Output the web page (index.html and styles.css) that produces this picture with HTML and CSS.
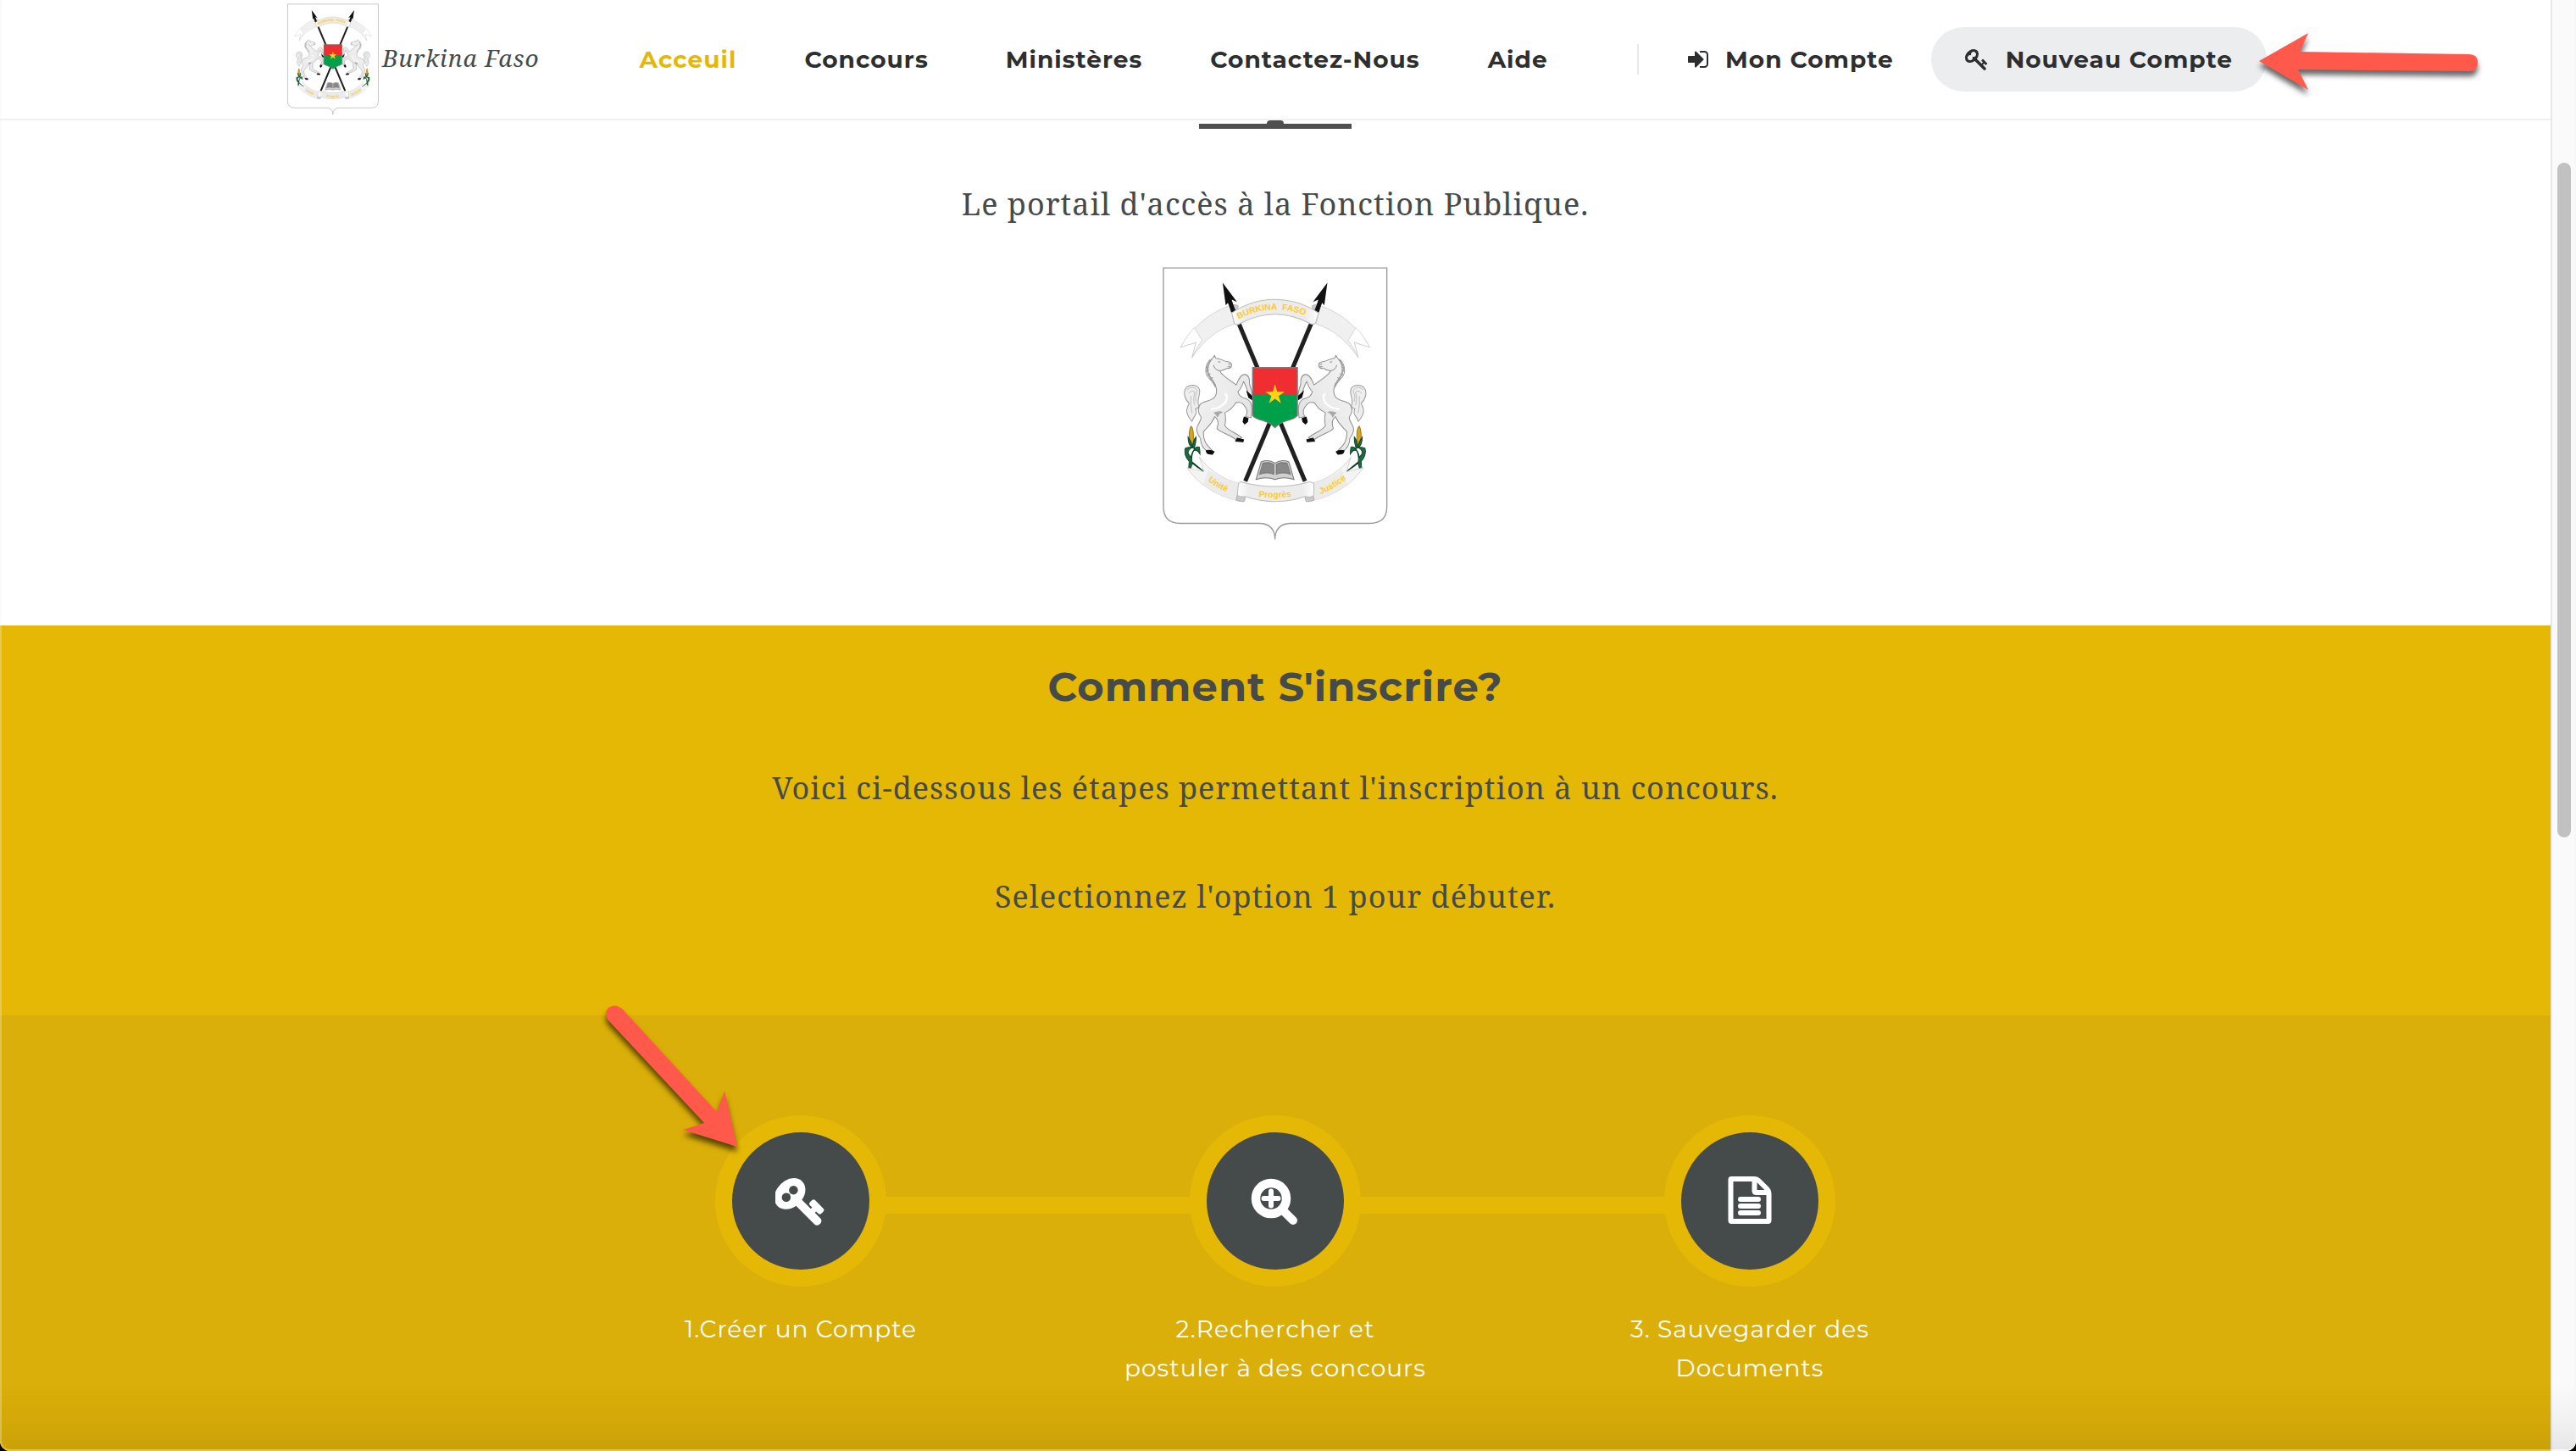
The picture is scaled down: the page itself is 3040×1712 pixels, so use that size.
FILE: index.html
```html
<!DOCTYPE html>
<html lang="fr">
<head>
<meta charset="utf-8">
<meta name="viewport" content="width=device-width, initial-scale=1">
<title>Burkina Faso - Fonction Publique</title>
<link rel="stylesheet" href="styles.css">
</head>
<body>
<svg class="defs" aria-hidden="true">
  <defs>
    <symbol id="icon-key" viewBox="0 0 1792 1792"><path d="M832 512q0-80-56-136t-136-56-136 56-56 136q0 42 19 83-41-19-83-19-80 0-136 56t-56 136 56 136 136 56 136-56 56-136q0-42-19-83 41 19 83 19 80 0 136-56t56-136zm851 704q0 17-49 66t-66 49q-9 0-28.5-16t-36.5-33-38.5-40-24.5-26l-96 96 220 220q28 28 28 68 0 42-39 81t-81 39q-40 0-68-28l-671-671q-176 131-365 131-163 0-265.5-102.5t-102.5-265.5q0-160 95-313t248-248 313-95q163 0 265.5 102.5t102.5 265.5q0 189-131 365l355 355 96-96q-3-3-26-24.5t-40-38.5-33-36.5-16-28.5q0-17 49-66t66-49q13 0 23 10 6 6 46 44.5t82 79.5 86.5 86 73 78 28.5 41z"/></symbol>
    <symbol id="icon-sign-in" viewBox="128 128 1536 1536"><path d="M1312 896q0 26-19 45l-544 544q-19 19-45 19t-45-19-19-45v-288h-448q-26 0-45-19t-19-45v-384q0-26 19-45t45-19h448v-288q0-26 19-45t45-19 45 19l544 544q19 19 19 45zm352-352v704q0 119-84.500 203.500t-203.500 84.500h-320q-13 0-22.500-9.500t-9.500-22.500q0-4-1-20t-.5-26.500 3-23.500 10-19.500 20.500-6.500h320q66 0 113-47t47-113v-704q0-66-47-113t-113-47h-312l-11.500-1-11.500-3-8-5.500-7-9-2-13.500q0-4-1-20t-.5-26.500 3-23.500 10-19.500 20.500-6.500h320q119 0 203.500 84.500t84.500 203.500z"/></symbol>
    <symbol id="icon-search" viewBox="0 0 60 60">
      <circle cx="25" cy="27" r="18" fill="none" stroke="currentColor" stroke-width="10.500"/>
      <path d="M25 18.500v17M16.500 27h17" stroke="currentColor" stroke-width="6" stroke-linecap="round"/>
      <path d="M38 40l13 13" stroke="currentColor" stroke-width="10" stroke-linecap="round"/>
    </symbol>
    <symbol id="icon-file" viewBox="0 0 60 60">
      <path d="M8 4h27.500q3 0 5 2l10 10q2 2 2 5v32q0 1-1 1H8.500q-1 0-1-1V5q0-1 .5-1z" fill="none" stroke="currentColor" stroke-width="6" stroke-linejoin="round"/>
      <path d="M35.500 5v13q0 2 2 2H52" fill="none" stroke="currentColor" stroke-width="6"/>
      <path d="M19 28h21M19 36h21M19 44h21" stroke="currentColor" stroke-width="6" stroke-linecap="round"/>
    </symbol>

    <linearGradient id="ribbon" x1="0" y1="0" x2="1" y2="0">
      <stop offset="0" stop-color="#fff"/><stop offset=".15" stop-color="#ececec"/>
      <stop offset=".85" stop-color="#ececec"/><stop offset="1" stop-color="#fff"/>
    </linearGradient>
    <linearGradient id="coat" x1="0" y1="0" x2="1" y2="1">
      <stop offset="0" stop-color="#f4f4f4"/><stop offset=".5" stop-color="#ebebeb"/><stop offset="1" stop-color="#dcdcdc"/>
    </linearGradient>

    <g id="crest-side">
      <path d="M312 209C240 232 175 285 134 357l54-17-14 54C210 340 262 292 322 276z" fill="#f0f0f0" stroke="#c4c4c4" stroke-width="2"/>
      <path d="M188 340L134 357C150 328 165 305 182 288L210 333C196 350 184 372 174 394z" fill="#fff" stroke="#c4c4c4" stroke-width="2"/>
      <path d="M306 211q20-8 32 0l-6 20-18 6z" fill="#c9c9c9" stroke="#aaa" stroke-width="2"/>
      <path d="M200 568C188 550 200 535 201 515C202 492 175 484 155 498C140 515 148 540 164 556C152 575 150 592 174 619C178 600 196 596 186 574z" fill="#eee" stroke="#9a9a9a" stroke-width="3"/>
      <path d="M156 508q22-20 36 2-10 22-4 40M162 520q12-14 22-4-8 26 0 46M170 530q-2 30 4 60" fill="none" stroke="#aaa" stroke-width="2"/>
      <path d="M247 396L253 386L258 396C272 396 284 406 300 408Q316 410 313 424Q310 434 296 432C286 440 276 438 272 442C284 462 310 474 330 490C338 470 346 453 360 453C374 454 378 470 377 484C378 500 388 506 387 536L376 528C370 512 364 492 356 478C350 496 344 506 336 514C340 530 350 535 368 540C386 550 388 570 383 606L362 602C372 590 370 574 352 556C344 548 336 554 330 552C316 574 306 582 290 588C294 606 292 624 290 634C304 654 328 658 350 676L332 686C314 668 276 660 262 644C268 628 268 612 254 602C244 630 226 640 214 656C214 690 226 704 246 722L230 726C210 714 204 696 204 680C198 668 188 660 191 642C196 626 206 618 206 604C192 586 194 566 206 556C228 544 246 546 256 530C266 512 258 488 246 474C226 456 222 430 232 414Q238 402 247 396z" fill="url(#coat)" stroke="#8e8e8e" stroke-width="3" stroke-linejoin="round"/>
      <path d="M245 398C232 412 226 438 234 454C242 470 252 476 258 496M238 400C220 420 218 446 230 462C240 474 252 484 256 498M223 430l10-2M224 442l10-4M229 456l10-6M238 468l10-4" fill="none" stroke="#999" stroke-width="3"/>
      <path d="M250 420q4 18 22 20M302 416l8 2M300 426h10M266 408l8 2" fill="none" stroke="#555" stroke-width="2"/>
      <path d="M250 588q20-8 34-2-14 4-20 20-6-12-14-18z" fill="#a8a8a8"/>
      <path d="M290 520q14 10 0 34-20 20-50 22" fill="none" stroke="#fff" stroke-width="7"/>
      <path d="M368 514l18 16v12l-12-8zM358 604l14 4-2 12-10 8-6-8zM334 678l22 6-2 7-26-2zM224 722q14-4 28 4l-6 9q-16 0-20-6z" fill="#0c0c0c" stroke="#0c0c0c" stroke-width="3"/>
      <path d="M170 636q12 4 8 66l-8 2q-12-42 0-68z" fill="#d9a51c" stroke="#8f7d1d" stroke-width="3"/>
      <path d="M174 712q-14-10-14-38 10 14 16 34 2-22 12-34 0 26-8 42 12-10 20-6 2 14 2 24-10-18-22-12-10 20-6 40l42 34-24-16-18-14-4 18-8 2 2-26q-20-20-14-46 10-6 28-4-20 8-18 22l10 14q4-22 16-32z" fill="#1d6b3e" stroke="#10452a" stroke-width="3"/>
      <path d="M200 745C235 792 285 826 342 838L334 899C262 882 196 842 156 782L216 797z" fill="#f4f4f4" stroke="#c4c4c4" stroke-width="2"/>
      <path d="M232 790C262 814 300 830 340 838L334 899C290 888 248 868 214 842z" fill="#ebebeb"/>
      <path d="M334 878q24-2 28 12l-4 12q-22 0-28-6z" fill="#c9c9c9" stroke="#999" stroke-width="2"/>
    </g>

    <symbol id="crest" viewBox="70 74 796 966">
      <path d="M73 77H862V920Q862 979 802 979H520Q467 982 467 1036Q467 982 414 979H132Q73 979 73 920z" fill="#fff" stroke="#999" stroke-width="4"/>
      <use href="#crest-side"/>
      <use href="#crest-side" transform="matrix(-1 0 0 1 935 0)"/>
      <g stroke="#202020" stroke-width="15">
        <path d="M300 180L573 830M634 180L362 830"/>
      </g>
      <path d="M282 129l51 68-19-8 12 42-14 2-10-34-9 10zM652 129l-51 68 19-8-12 42 14 2 10-34 9 10z" fill="#111"/>
      <path d="M314 236C410 172 524 172 621 236L610 272Q600 280 588 272C508 230 428 230 346 272Q334 282 324 274z" fill="url(#ribbon)" stroke="#bcbcbc" stroke-width="3"/>
      <path id="arc-top" d="M338 258Q467 190 606 260" fill="none"/>
      <text class="crest-text crest-title"><textPath href="#arc-top">BURKINA  FASO</textPath></text>
      <path d="M388 429H546V598Q540 608 510 616Q484 624 467 641Q450 624 424 616Q394 608 388 598z" fill="#00a04a"/>
      <path d="M388 429H546V525H388z" fill="#f02d30"/>
      <path d="M467 488l8 26h26l-21 15 8 26-21-16-21 16 8-26-21-15h26z" fill="#fcd116"/>
      <path d="M388 429H546V598Q540 608 510 616Q484 624 467 641Q450 624 424 616Q394 608 388 598z" fill="none" stroke="#7a7a7a" stroke-width="4"/>
      <path d="M418 762L400 824Q436 812 467 824Q498 812 534 824L516 762Q490 752 467 766Q444 752 418 762z" fill="#d0d0d0" stroke="#777" stroke-width="3"/>
      <path d="M424 766Q446 760 463 770V806Q440 796 412 806zM510 766Q488 760 471 770V806Q494 796 522 806z" fill="#888" stroke="#666" stroke-width="2"/>
      <path d="M346 832Q467 866 590 832L604 838V876Q602 890 574 884Q467 920 362 884Q336 888 334 876L338 838z" fill="url(#ribbon)" stroke="#bcbcbc" stroke-width="3"/>
      <path id="arc-left" d="M230 828Q262 856 312 874" fill="none"/>
      <path id="arc-mid" d="M409 885Q467 893 540 882" fill="none"/>
      <path id="arc-right" d="M628 876Q680 856 724 818" fill="none"/>
      <text class="crest-text"><textPath href="#arc-left">Unité</textPath></text>
      <text class="crest-text"><textPath href="#arc-mid">Progrès</textPath></text>
      <text class="crest-text"><textPath href="#arc-right">Justice</textPath></text>
    </symbol>
  </defs>
</svg>

<div class="page">
  <header class="header">
    <div class="header-inner">
      <a class="brand" href="#">
        <svg class="brand-crest" aria-hidden="true"><use href="#crest"/></svg>
        <span>Burkina Faso</span>
      </a>
      <nav class="nav">
        <div class="nav-group">
          <a class="active" href="#">Acceuil</a>
          <a href="#">Concours</a>
        </div>
        <div class="nav-group">
          <a href="#">Ministères</a>
          <a href="#">Contactez-Nous</a>
          <a href="#">Aide</a>
        </div>
      </nav>
      <div class="account">
        <a class="login" href="#"><svg class="icon-login" aria-hidden="true"><use href="#icon-sign-in"/></svg>Mon Compte</a>
        <button class="register" type="button"><svg class="icon-small" aria-hidden="true"><use href="#icon-key"/></svg>Nouveau Compte
          <svg class="pointer pointer-register" viewBox="0 0 270 90" aria-hidden="true"><path d="M6 42L64 9L54 31L254 34Q264 34 264 44Q264 54 254 54L52 52L64 76z"/></svg>
        </button>
      </div>
    </div>
  </header>

  <main>
    <section class="intro">
      <div class="rule"></div>
      <p class="lead">Le portail d'accès à la Fonction Publique.</p>
      <svg class="intro-crest" role="img" aria-label="Armoiries"><use href="#crest"/></svg>
    </section>

    <section class="how">
      <h2>Comment S'inscrire?</h2>
      <p class="lead">Voici ci-dessous les étapes permettant l'inscription à un concours.</p>
      <p class="lead">Selectionnez l'option 1 pour débuter.</p>
    </section>

    <section class="steps">
      <ol class="steps-list">
        <li class="step">
          <a class="step-link" href="#">
            <span class="disc"><svg class="icon-large icon-bold" aria-hidden="true"><use href="#icon-key"/></svg>
              <svg class="pointer pointer-step" viewBox="0 0 170 190" aria-hidden="true"><path d="M35 20L146 141L155 116L170 182L106 162L131 154L18 33Q12 25 18 18Q26 12 35 20z"/></svg>
            </span>
            <span class="label">1.Créer un Compte</span>
          </a>
        </li>
        <li class="step">
          <a class="step-link" href="#">
            <span class="disc"><svg class="icon-large" aria-hidden="true"><use href="#icon-search"/></svg></span>
            <span class="label">2.Rechercher et postuler à des concours</span>
          </a>
        </li>
        <li class="step">
          <a class="step-link" href="#">
            <span class="disc"><svg class="icon-large" aria-hidden="true"><use href="#icon-file"/></svg></span>
            <span class="label">3. Sauvegarder des Documents</span>
          </a>
        </li>
      </ol>
    </section>
  </main>
</div>
<div class="scroll-track"><div class="scroll-thumb"></div></div>
</body>
</html>
```
FILE: styles.css
```css
:root {
  --yellow: #e6b806;
  --yellow-dark: #dbaf09;
  --slate: #454a4b;
  --ink: #2d2e2f;
}

* { box-sizing: border-box; }

html { background: #000; }

body {
  position: relative;
  display: flex;
  min-height: 100vh;
  margin: 0;
  overflow: hidden;
  border-radius: 0 0 12px 12px;
  background: #fff;
  color: var(--slate);
  font-family: Montserrat, Inter, sans-serif;
  font-size: 28px;
  letter-spacing: 1px;
}

/* Window edge and the shade along its foot */
body::after {
  content: "";
  position: absolute;
  inset: 0;
  border: 2px solid rgba(240, 240, 240, .3);
  border-top: 0;
  border-radius: 0 0 12px 12px;
  background: linear-gradient(to top, rgba(0, 0, 0, .08), rgba(0, 0, 0, .03) 36px, transparent 76px);
  pointer-events: none;
}

a { color: inherit; text-decoration: none; }

.defs { position: absolute; width: 0; height: 0; }

.page {
  display: flex;
  flex: 1;
  flex-direction: column;
  min-width: 0;
}

main { display: flex; flex: 1; flex-direction: column; }

.header { border-bottom: 2px solid #f1f1f1; }

.header-inner {
  display: flex;
  align-items: center;
  max-width: 2340px;
  height: 140px;
  margin: 0 auto;
  padding-left: 4px;
}

.brand {
  display: flex;
  align-items: center;
  gap: 4px;
  margin-right: 118px;
  font-family: "Noto Serif", serif;
  font-style: italic;
  white-space: nowrap;
}

.brand span { padding-bottom: 4px; }

.brand-crest { width: 108px; height: 132px; }

.nav,
.nav-group,
.account,
.login,
.register { display: flex; align-items: center; white-space: nowrap; }

.nav { gap: 91px; color: var(--ink); font-weight: 700; }
.nav-group { gap: 80px; }
.nav .active { color: var(--yellow); }

.account { gap: 44px; margin-left: auto; color: var(--ink); font-weight: 700; }

.login { gap: 20px; }

.login::before {
  content: "";
  width: 2px;
  height: 36px;
  margin-right: 38px;
  background: #e9e9e9;
}

.register {
  position: relative;
  gap: 20px;
  height: 76px;
  padding: 0 40px;
  border: 0;
  border-radius: 38px;
  background: #ecedef;
  color: inherit;
  font: inherit;
  letter-spacing: inherit;
}

.icon-login { width: 24px; height: 24px; fill: currentColor; }
.icon-small { width: 28px; height: 28px; fill: currentColor; }
.icon-large { width: 60px; height: 60px; fill: currentColor; }
.icon-bold { stroke: currentColor; stroke-width: 70px; }

.pointer {
  position: absolute;
  overflow: visible;
  fill: #ff594b;
  filter: drop-shadow(0 6px 3px rgba(0, 0, 0, .6));
}

.pointer-register { top: -2px; left: 381px; width: 270px; height: 90px; }
.pointer-step { top: -165px; left: -164px; width: 170px; height: 190px; }

.intro {
  display: flex;
  flex-direction: column;
  align-items: center;
  padding: 4px 0 100px;
}

.rule {
  position: relative;
  width: 180px;
  height: 6px;
  margin-bottom: 57px;
  background: #4f4f4f;
}

.rule::before {
  content: "";
  position: absolute;
  top: -4px;
  left: 80px;
  width: 20px;
  height: 4px;
  border-radius: 6px 6px 0 0;
  background: #4f4f4f;
}

.lead {
  margin: 0;
  font-family: "Noto Serif", serif;
  font-size: 36px;
  line-height: 64px;
  text-align: center;
}

.intro-crest { width: 266px; height: 323px; margin-top: 42px; }

.how {
  display: flex;
  flex-direction: column;
  gap: 64px;
  padding: 40px 0 108px;
  background: var(--yellow);
}

.how h2 {
  margin: 0 0 -8px;
  font-size: 48px;
  font-weight: 700;
  line-height: 64px;
  text-align: center;
}

.steps { flex: 1; padding: 118px 0 60px; background: var(--yellow-dark); }

.steps-list {
  display: grid;
  grid-template-columns: repeat(3, 1fr);
  max-width: 1680px;
  margin: 0 auto;
  padding: 0;
  list-style: none;
}

.step { position: relative; }

.step:not(:last-child)::before {
  content: "";
  position: absolute;
  top: 96px;
  left: 50%;
  width: 100%;
  height: 20px;
  background: var(--yellow);
}

.step-link {
  display: flex;
  flex-direction: column;
  align-items: center;
  gap: 27px;
  color: #fff;
}

.disc {
  position: relative;
  z-index: 1;
  display: flex;
  align-items: center;
  justify-content: center;
  width: 202px;
  height: 202px;
  border: 20px solid var(--yellow);
  border-radius: 50%;
  background: var(--slate);
}

.label { max-width: 360px; line-height: 46px; text-align: center; }

.scroll-track {
  width: 30px;
  padding: 192px 6px 0;
  border-left: 2px solid #e8e8e8;
  background: #fafafa;
}

.scroll-thumb { width: 16px; height: 796px; border-radius: 8px; background: #c1c1c1; }

.crest-text {
  fill: #fdcb2e;
  font: bold 31px "Liberation Sans", sans-serif;
  letter-spacing: 0;
}

.crest-title { white-space: pre; }
```
